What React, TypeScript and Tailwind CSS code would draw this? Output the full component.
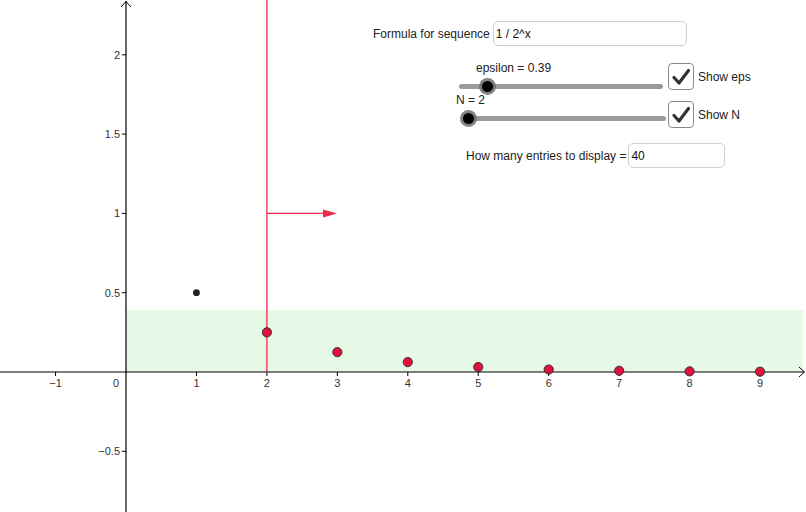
import React from "react";

const OX = 126; // y-axis x position
const OY = 372; // x-axis y position
const SX = 70.45; // px per unit in x
const SY = 158.6; // px per unit in y

const px = (x: number) => OX + x * SX;
const py = (y: number) => OY - y * SY;

function Slider({ left, top, width, knob }: { left: number; top: number; width: number; knob: number }) {
  return (
    <div className="absolute h-[16px]" style={{ left, top, width }}>
      <div className="absolute left-0 right-0 top-[6px] h-[5px] rounded-full bg-[#9a9a9a]" />
      <div
        className="absolute top-[-0.5px] w-[17px] h-[17px] rounded-full bg-[#6e6e6e]/85 flex items-center justify-center"
        style={{ left: knob - 8.5 }}
      >
        <div className="w-[11px] h-[11px] rounded-full bg-black" />
      </div>
    </div>
  );
}

function Check({ top, label }: { top: number; label: string }) {
  return (
    <div className="absolute left-[668px] flex items-center gap-[4px]" style={{ top }}>
      <div className="w-[26px] h-[27px] rounded-[4px] border-[1.5px] border-[#8a8a8a] bg-white flex items-center justify-center">
        <svg width="20" height="20" viewBox="0 0 20 20">
          <path d="M3 10.5 L8 16 L17.5 3.5" fill="none" stroke="#333" strokeWidth="3.2" strokeLinecap="round" strokeLinejoin="round" />
        </svg>
      </div>
      <span className="text-[12px] text-[#222]">{label}</span>
    </div>
  );
}

export default function App() {
  const xs = [-1, 1, 2, 3, 4, 5, 6, 7, 8, 9];
  const ys = [2, 1.5, 1, 0.5, -0.5];
  const pts = [2, 3, 4, 5, 6, 7, 8, 9].map((n) => ({ x: px(n), y: py(1 / Math.pow(2, n)) }));

  return (
    <div className="relative w-[806px] h-[512px] bg-white overflow-hidden font-['Liberation_Sans',Arial,sans-serif]">
      <svg className="absolute inset-0" width="806" height="512" viewBox="0 0 806 512">
        {/* epsilon band */}
        <rect x={OX} y={py(0.39)} width={803 - OX} height={OY - py(0.39)} fill="#e6f8e6" />

        {/* axes */}
        <line x1={0} y1={OY} x2={804} y2={OY} stroke="#000" strokeWidth="1.2" />
        <path d="M799 367 L804.5 372 L799 377" fill="none" stroke="#000" strokeWidth="1" />
        <line x1={OX} y1={1} x2={OX} y2={512} stroke="#000" strokeWidth="1.2" />
        <path d="M121 7 L126 1.5 L131 7" fill="none" stroke="#000" strokeWidth="1" />

        {/* x ticks & labels */}
        {xs.map((v) => (
          <g key={v}>
            <line x1={px(v)} y1={OY} x2={px(v)} y2={OY + 4} stroke="#000" strokeWidth="1" />
            <text x={px(v)} y={OY + 15} fontSize="11" fill="#333" textAnchor="middle">
              {v < 0 ? "\u2212" + Math.abs(v) : v}
            </text>
          </g>
        ))}
        <text x={116} y={OY + 15} fontSize="11" fill="#333" textAnchor="middle">0</text>

        {/* y ticks & labels */}
        {ys.map((v) => (
          <g key={v}>
            <line x1={OX - 4} y1={py(v)} x2={OX} y2={py(v)} stroke="#000" strokeWidth="1" />
            <text x={OX - 6} y={py(v) + 4} fontSize="11" fill="#333" textAnchor="end">
              {v < 0 ? "\u2212" + Math.abs(v) : v}
            </text>
          </g>
        ))}

        {/* N vertical line and arrow */}
        <line x1={px(2)} y1={0} x2={px(2)} y2={OY} stroke="#f0284c" strokeWidth="1.3" />
        <line x1={px(2)} y1={py(1)} x2={326} y2={py(1)} stroke="#f0284c" strokeWidth="1.3" />
        <path d={`M323 ${py(1) - 4} L337 ${py(1)} L323 ${py(1) + 4} Z`} fill="#f0284c" />

        {/* first term */}
        <circle cx={px(1)} cy={py(0.5)} r="3.4" fill="#222" />

        {/* terms n >= N */}
        {pts.map((p, i) => (
          <circle key={i} cx={p.x} cy={p.y} r="4.6" fill="#e3103c" stroke="#333" strokeWidth="1" />
        ))}
      </svg>

      {/* Formula input */}
      <div className="absolute left-[373px] top-[21px] flex items-center gap-[3px]">
        <span className="text-[12px] text-[#222]">Formula for sequence</span>
        <div className="w-[194px] h-[25px] rounded-[5px] border border-[#cfcfcf] bg-white flex items-center px-[2px]">
          <span className="text-[12px] text-[#111]">1 / 2^x</span>
        </div>
      </div>

      {/* epsilon slider */}
      <div className="absolute left-[476px] top-[59px] text-[12px] text-[#222]">epsilon = 0.39</div>
      <Slider left={459} top={78} width={204} knob={28} />
      <Check top={63} label="Show eps" />

      {/* N slider */}
      <div className="absolute left-[456px] top-[91px] text-[12px] text-[#222]">N = 2</div>
      <Slider left={467} top={110} width={199} knob={1} />
      <Check top={101} label="Show N" />

      {/* entries input */}
      <div className="absolute left-[466px] top-[143px] flex items-center gap-[2px]">
        <span className="text-[12px] text-[#222]">How many entries to display =</span>
        <div className="w-[97px] h-[25px] rounded-[5px] border border-[#cfcfcf] bg-white flex items-center px-[2px]">
          <span className="text-[12px] text-[#111]">40</span>
        </div>
      </div>
    </div>
  );
}
